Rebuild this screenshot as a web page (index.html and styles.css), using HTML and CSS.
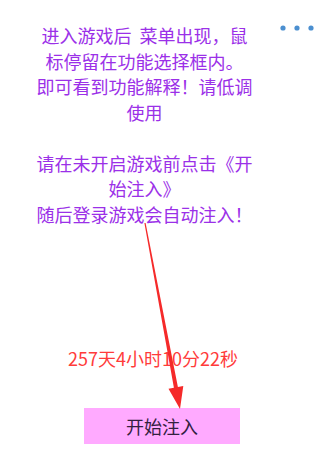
FILE: index.html
```html
<!DOCTYPE html>
<html>
<head>
  <meta charset="utf-8">
  <title>注入</title>
  <link rel="stylesheet" href="styles.css">
</head>
<body>
  <div class="page">
    <button class="more" aria-label="更多">
      <svg width="34" height="8" viewBox="0 0 34 8">
        <circle cx="3" cy="4" r="2.6"/>
        <circle cx="17" cy="4" r="2.6"/>
        <circle cx="31" cy="4" r="2.6"/>
      </svg>
    </button>

    <div class="tips">进入游戏后  菜单出现，鼠标停留在功能选择框内。
即可看到功能解释！请低调使用

请在未开启游戏前点击《开始注入》
随后登录游戏会自动注入！</div>

    <div class="countdown">257天4小时10分22秒</div>

    <button class="start">开始注入</button>

    <!-- 标注箭头 -->
    <svg class="arrow" width="334" height="454" viewBox="0 0 334 454">
      <polygon points="144.4,223.1 145.6,222.9 177.9,387.0 183.3,386.0 180,409 168.5,388.8 173.9,387.8"/>
    </svg>
  </div>
</body>
</html>
```

FILE: styles.css
```css
body {
  margin: 0;
  background: #ffffff;
  font-family: "Noto Sans CJK SC", "Noto Sans", sans-serif;
}

.page {
  position: relative;
  width: 334px;
  height: 454px;
  overflow: hidden;
}

.more {
  position: absolute;
  top: 24px;
  right: 20px;
  padding: 0;
  border: none;
  background: none;
  line-height: 0;
}

.more circle {
  fill: #4b8fd0;
}

.tips {
  width: 217px;
  margin-left: 36px;
  padding-top: 23px;
  font-size: 18px;
  line-height: 25.5px;
  color: #9b30e8;
  text-align: center;
  white-space: pre-wrap;
}

.countdown {
  margin-top: 119px;
  padding-left: 68px;
  font-size: 18px;
  line-height: 25.5px;
  color: #ff3b3b;
}

.start {
  display: block;
  width: 156px;
  height: 36px;
  margin: 36px 0 0 84px;
  padding: 0;
  border: none;
  background: #ffaaff;
  font-family: inherit;
  font-size: 18px;
  line-height: 36px;
  color: #33203f;
}

.arrow {
  position: absolute;
  top: 0;
  left: 0;
  pointer-events: none;
}

.arrow polygon {
  fill: #f52a2a;
}
```
